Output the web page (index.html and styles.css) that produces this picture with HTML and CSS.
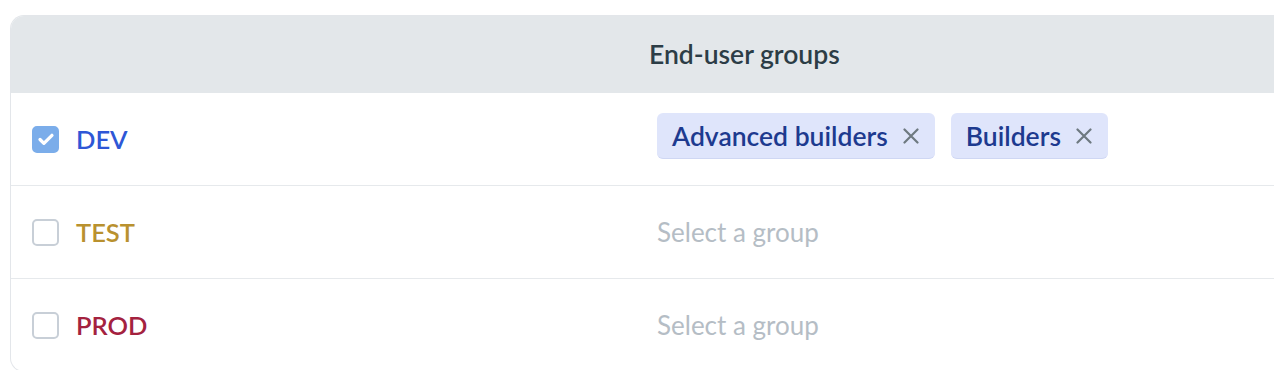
FILE: index.html
```html
<!DOCTYPE html>
<html lang="en">
<head>
    <meta charset="UTF-8">
    <meta name="viewport" content="width=device-width, initial-scale=1.0">
    <title>Environments</title>
    <link rel="stylesheet" href="styles.css">
</head>
<body>
    <div class="table">
        <div class="row header">
            <div class="cell env"></div>
            <div class="cell groups">End-user groups</div>
        </div>
        <div class="row">
            <div class="cell env">
                <span class="checkbox checked">
                    <svg viewBox="0 0 24 24" width="22" height="22"><path d="M5.5 12.5l4.2 4.2L18.5 8" fill="none" stroke="#fff" stroke-width="3.6" stroke-linecap="round" stroke-linejoin="round"/></svg>
                </span>
                <span class="env-name dev">DEV</span>
            </div>
            <div class="cell groups">
                <span class="tag">Advanced builders
                    <svg class="remove" viewBox="0 0 16 16" width="16" height="16"><path d="M1.5 1.5l13 13M14.5 1.5l-13 13" stroke="#6e7980" stroke-width="2.2" stroke-linecap="round"/></svg>
                </span>
                <span class="tag">Builders
                    <svg class="remove" viewBox="0 0 16 16" width="16" height="16"><path d="M1.5 1.5l13 13M14.5 1.5l-13 13" stroke="#6e7980" stroke-width="2.2" stroke-linecap="round"/></svg>
                </span>
            </div>
        </div>
        <div class="row">
            <div class="cell env">
                <span class="checkbox"></span>
                <span class="env-name test">TEST</span>
            </div>
            <div class="cell groups">
                <span class="placeholder">Select a group</span>
            </div>
        </div>
        <div class="row last">
            <div class="cell env">
                <span class="checkbox"></span>
                <span class="env-name prod">PROD</span>
            </div>
            <div class="cell groups">
                <span class="placeholder">Select a group</span>
            </div>
        </div>
    </div>
</body>
</html>
```

FILE: styles.css
```css
html, body {
    margin: 0;
    padding: 0;
    background: #ffffff;
    overflow: hidden;
}
body {
    font-family: Lato, 'Noto Sans', sans-serif;
    padding: 15px 0 0 10px;
}
.table {
    width: 1300px;
    border: 1.5px solid #e3e6ea;
    border-right: none;
    border-radius: 14px 0 0 14px;
    overflow: hidden;
}
.row {
    display: grid;
    grid-template-columns: 636px 1fr;
    height: 92px;
    border-bottom: 1.5px solid #e6e9ec;
}
.row.last {
    border-bottom: none;
}
.row.header {
    height: 77px;
    background: #e3e7ea;
    border-bottom: none;
}
.cell {
    display: flex;
    align-items: center;
}
.header .groups {
    color: #2c3d46;
    font-size: 26.5px;
    font-weight: 600;
    padding-left: 2px;
    padding-bottom: 2px;
}
.env {
    padding-left: 21px;
    gap: 17px;
}
.checkbox {
    width: 23px;
    height: 23px;
    border: 2px solid #c8cfd7;
    border-radius: 5px;
    display: flex;
    align-items: center;
    justify-content: center;
}
.checkbox.checked {
    background: #7badea;
    border-color: #7badea;
}
.env-name {
    font-size: 25.5px;
    font-weight: 600;
}
.dev { color: #2e57d6; }
.test { color: #b9912f; }
.prod { color: #a4223f; }
.groups {
    padding-left: 10px;
    gap: 16px;
}
.row .groups .tag {
    margin-bottom: 6px;
}
.tag {
    display: inline-flex;
    align-items: center;
    height: 46px;
    padding: 0 16px 0 15px;
    background: #dfe5fb;
    border-bottom: 1.5px solid #cfd7f3;
    border-radius: 6px;
    color: #1d3a8f;
    font-size: 26.5px;
    font-weight: 600;
    box-sizing: border-box;
}
.remove {
    margin-left: 15px;
}
.placeholder {
    color: #b5bdc5;
    font-size: 26px;
    padding-left: 0;
}
```
